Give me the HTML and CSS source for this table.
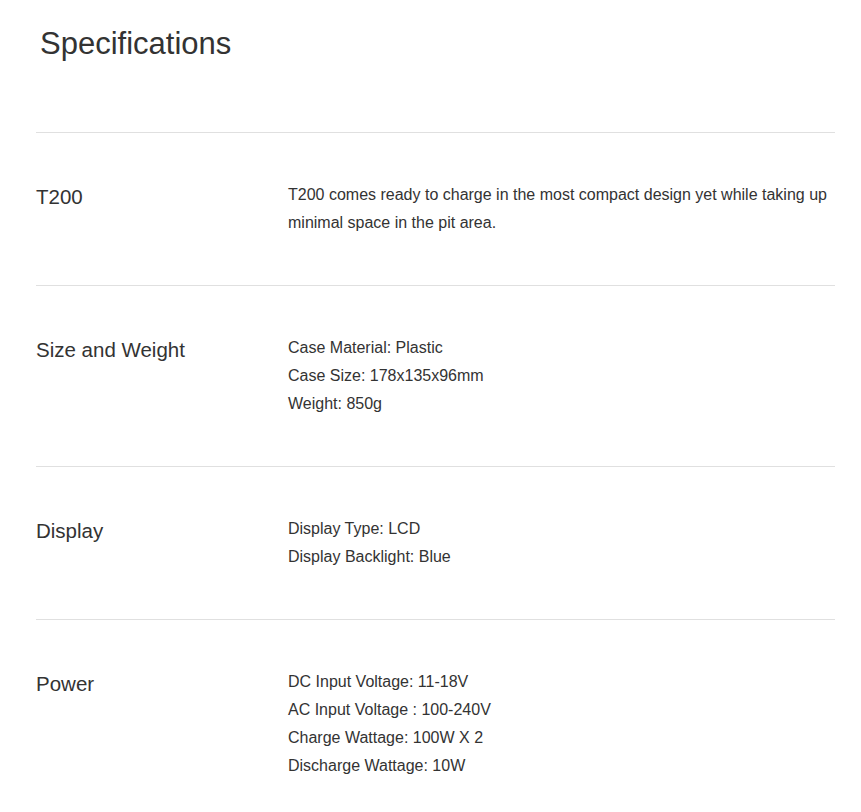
FILE: index.html
```html
<!DOCTYPE html>
<html lang="en">
<head>
<meta charset="utf-8">
<title>Specifications</title>
<link rel="stylesheet" href="styles.css">
</head>
<body>
<section class="specs">
  <h2 class="specs-title">Specifications</h2>
  <div class="spec-row">
    <div class="spec-label">T200</div>
    <div class="spec-value">
      <p>T200 comes ready to charge in the most compact design yet while taking up minimal space in the pit area.</p>
    </div>
  </div>
  <div class="spec-row">
    <div class="spec-label">Size and Weight</div>
    <div class="spec-value">
      <p>Case Material: Plastic</p>
      <p>Case Size: 178x135x96mm</p>
      <p>Weight: 850g</p>
    </div>
  </div>
  <div class="spec-row">
    <div class="spec-label">Display</div>
    <div class="spec-value">
      <p>Display Type: LCD</p>
      <p>Display Backlight: Blue</p>
    </div>
  </div>
  <div class="spec-row">
    <div class="spec-label">Power</div>
    <div class="spec-value">
      <p>DC Input Voltage: 11-18V</p>
      <p>AC Input Voltage : 100-240V</p>
      <p>Charge Wattage: 100W X 2</p>
      <p>Discharge Wattage: 10W</p>
    </div>
  </div>
</section>
</body>
</html>
```

FILE: styles.css
```css
html, body {
  margin: 0;
  padding: 0;
  background: #fff;
}

body {
  font-family: "Liberation Sans", Arial, sans-serif;
  color: #333;
}

.specs {
  width: 799px;
  margin-left: 36px;
  padding-top: 26px;
}

.specs-title {
  margin: 0 0 70px 0;
  padding-left: 4px;
  font-size: 31px;
  line-height: 36px;
  font-weight: normal;
  color: #333;
}

.spec-row {
  display: grid;
  grid-template-columns: 252px 1fr;
  border-top: 1px solid #e0e0e0;
  padding: 48px 0 48px 0;
}

.spec-label {
  font-size: 20.5px;
  line-height: 32px;
  color: #333;
}

.spec-value {
  font-size: 16px;
  line-height: 28px;
  color: #333;
}

.spec-value p {
  margin: 0;
}
```
